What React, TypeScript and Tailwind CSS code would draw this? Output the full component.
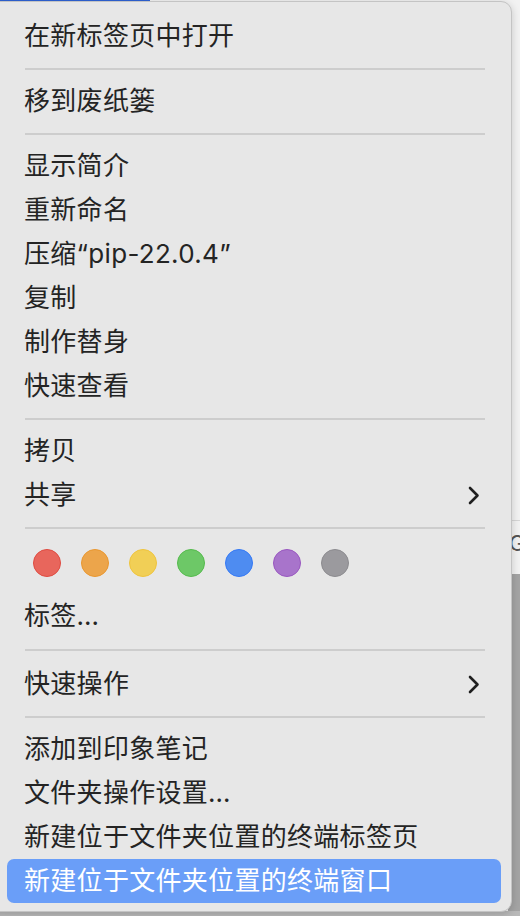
import React from "react";

const FONT = { fontFamily: '"Inter", "Noto Sans CJK SC", "Noto Sans", sans-serif' };

function Chevron({ white }: { white?: boolean }) {
  return (
    <svg width="12" height="19" viewBox="0 0 12 19" fill="none">
      <path
        d="M2 2 L9.5 9.5 L2 17"
        stroke={white ? "#ffffff" : "#1f1f1f"}
        strokeWidth="2.6"
        strokeLinecap="round"
        strokeLinejoin="round"
      />
    </svg>
  );
}

function Item({ label, sub, active }: { label: string; sub?: boolean; active?: boolean }) {
  return (
    <div
      className={
        "ml-[18px] mr-[10px] h-[44px] flex items-center justify-between pl-[17px] pr-[21px] rounded-[7px] " +
        (active ? "bg-[#6a9ef8] text-white" : "text-[#242424]")
      }
    >
      <span className="text-[26px] leading-none tracking-[0.3px]">{label}</span>
      {sub && <Chevron white={active} />}
    </div>
  );
}

function Sep({ tall }: { tall?: boolean }) {
  return (
    <div className={(tall ? "h-[24px]" : "h-[21px]") + " flex items-center"}>
      <div className="ml-[36px] w-[460px] h-[2px] bg-[#cdcdcd]" />
    </div>
  );
}

const tags = [
  { fill: "#e8665c", border: "#df4b41" },
  { fill: "#eca54b", border: "#e9972f" },
  { fill: "#f1cf56", border: "#efc43d" },
  { fill: "#6dc867", border: "#55bb4d" },
  { fill: "#4e8cf1", border: "#3579f5" },
  { fill: "#a874cb", border: "#9957c0" },
  { fill: "#9b9a9e", border: "#8c8b8f" },
];

export default function App() {
  return (
    <div className="relative w-[520px] h-[916px] overflow-hidden bg-[#f2f2f2]" style={FONT}>
      {/* background desktop bits */}
      <div className="absolute left-0 top-0 w-[150px] h-[3px] bg-[#2f63d4]" />
      <div className="absolute right-0 top-[520px] w-[12px] h-[1px] bg-[#d6d6d6]" />
      <div className="absolute right-0 top-[528px] w-[12px] h-[30px] text-[22px] leading-[30px] text-[#555] overflow-hidden">
        <span className="ml-[1px]">G</span>
      </div>
      <div className="absolute right-0 top-[574px] w-[12px] bottom-0 bg-[#a4a4a4]" />
      <div className="absolute left-0 right-0 bottom-0 h-[5px] bg-[#b9b9b9]" />

      {/* menu */}
      <div className="absolute left-[-12px] top-[1px] w-[524px] h-[911px] rounded-[11px] bg-[#e7e7e7] border border-[#c4c4c4] shadow-[0_2px_8px_rgba(0,0,0,0.18)] pt-[12px]">
        <Item label="在新标签页中打开" />
        <Sep />
        <Item label="移到废纸篓" />
        <Sep />
        <Item label="显示简介" />
        <Item label="重新命名" />
        <Item label="压缩“pip-22.0.4”" />
        <Item label="复制" />
        <Item label="制作替身" />
        <Item label="快速查看" />
        <Sep />
        <Item label="拷贝" />
        <Item label="共享" sub />
        <Sep />
        <div className="h-[56px] flex items-start pt-[11px] gap-[20px] pl-[44px]">
          {tags.map((t, i) => (
            <div
              key={i}
              className="w-[28px] h-[28px] rounded-full border-[1.5px]"
              style={{ backgroundColor: t.fill, borderColor: t.border }}
            />
          ))}
        </div>
        <Item label="标签…" />
        <Sep tall />
        <Item label="快速操作" sub />
        <Sep />
        <Item label="添加到印象笔记" />
        <Item label="文件夹操作设置…" />
        <Item label="新建位于文件夹位置的终端标签页" />
        <Item label="新建位于文件夹位置的终端窗口" active />
      </div>
    </div>
  );
}
